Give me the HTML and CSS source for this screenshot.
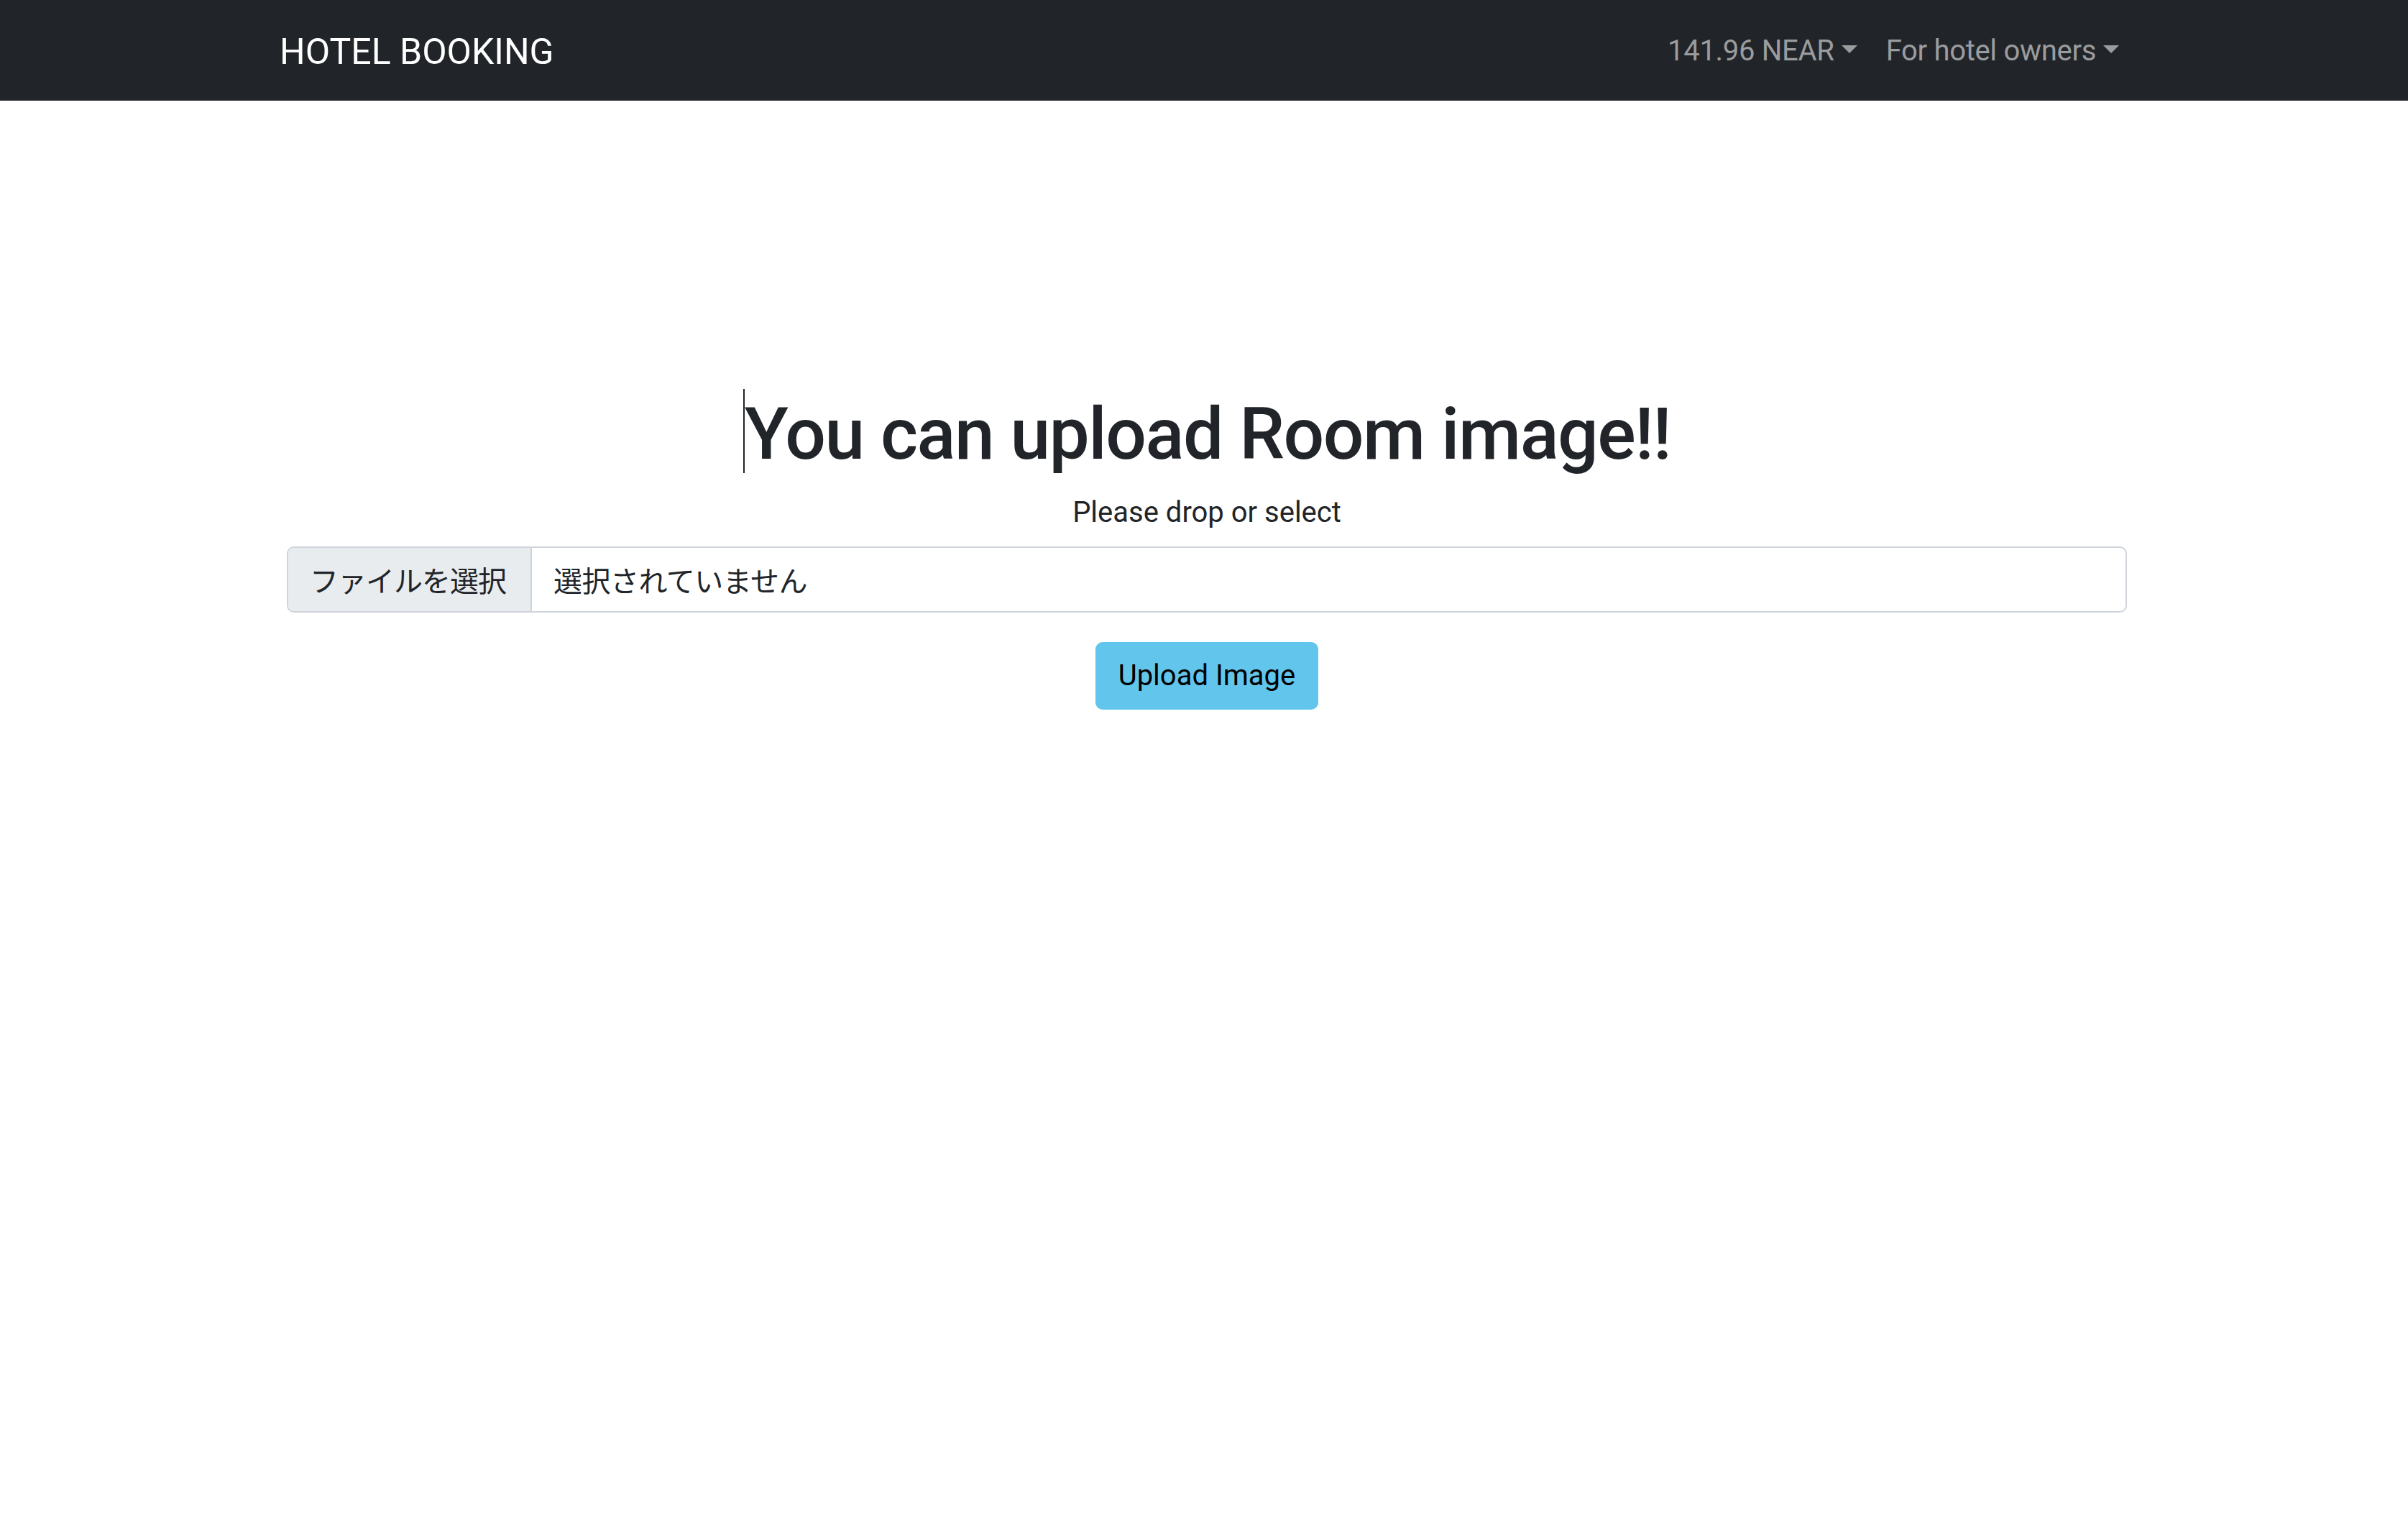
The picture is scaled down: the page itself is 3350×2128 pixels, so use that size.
FILE: index.html
```html
<!DOCTYPE html>
<html lang="ja">
<head>
<meta charset="utf-8">
<title>HOTEL BOOKING</title>
<link rel="stylesheet" href="styles.css">
</head>
<body>
<header class="navbar">
  <div class="nav-inner">
    <a class="brand" href="#">HOTEL BOOKING</a>
    <ul class="nav">
      <li><a class="nav-link dropdown" href="#">141.96 NEAR</a></li>
      <li><a class="nav-link dropdown" href="#">For hotel owners</a></li>
    </ul>
  </div>
</header>
<main class="upload">
  <h1 class="title"><span class="text-caret"></span>You can upload Room image!!</h1>
  <p class="hint">Please drop or select</p>
  <div class="file-field">
    <span class="file-btn">ファイルを選択</span>
    <span class="file-name">選択されていません</span>
  </div>
  <button class="btn-upload" type="button">Upload Image</button>
</main>
</body>
</html>
```
FILE: styles.css
```css
* { box-sizing: border-box; }
html, body { margin: 0; padding: 0; }
body {
  font-family: Roboto, "Noto Sans CJK JP", sans-serif;
  color: #212529;
  background: #fff;
  font-size: 40px;
  line-height: 1.5;
}
.navbar {
  background: #212529;
  height: 140px;
}
.nav-inner {
  height: 100%;
  display: flex;
  align-items: center;
  justify-content: space-between;
  padding: 0 382px 0 389px;
}
.brand {
  color: #fff;
  text-decoration: none;
  font-size: 50px;
  line-height: 75px;
  padding-top: 4px;
}
.nav {
  list-style: none;
  margin: 0;
  padding: 0;
  display: flex;
}
.nav-link {
  display: block;
  color: #9b9c9e;
  text-decoration: none;
  font-size: 40px;
  line-height: 60px;
  letter-spacing: -0.3px;
  padding: 2px 20px 0;
}
.dropdown::after {
  content: "";
  display: inline-block;
  margin-left: 10px;
  vertical-align: 10px;
  border-top: 11px solid;
  border-left: 11px solid transparent;
  border-right: 11px solid transparent;
  border-bottom: 0;
}
.upload {
  display: flex;
  flex-direction: column;
  align-items: center;
  padding-left: 8px;
}
.title {
  margin: 401px 0 19px;
  font-size: 100px;
  font-weight: 500;
  line-height: 120px;
  letter-spacing: -1.5px;
  color: #212529;
}
.text-caret {
  display: inline-block;
  width: 2px;
  height: 117px;
  background: #212529;
  vertical-align: -20px;
}
.hint {
  margin: 0 0 17px;
  font-size: 40px;
  line-height: 60px;
}
.file-field {
  width: 2560px;
  height: 92px;
  border: 2px solid #ced4da;
  border-radius: 10px;
  display: flex;
  align-items: stretch;
  overflow: hidden;
  font-family: "Noto Sans CJK JP", Roboto, sans-serif;
  font-size: 40px;
  white-space: nowrap;
}
.file-btn {
  display: flex;
  align-items: center;
  flex-shrink: 0;
  padding: 0 34px 0 30px;
  background: #e9ecef;
  border-right: 2px solid #ced4da;
  letter-spacing: -1px;
  color: #212529;
}
.file-name {
  display: flex;
  align-items: center;
  padding: 0 30px;
  color: #212529;
  letter-spacing: -0.5px;
}
.btn-upload {
  margin-top: 41px;
  height: 94px;
  padding: 0 32px;
  border: 0;
  border-radius: 10px;
  background: #62c6ec;
  color: #000;
  font-family: Roboto, sans-serif;
  font-size: 40px;
  line-height: 60px;
}
```
